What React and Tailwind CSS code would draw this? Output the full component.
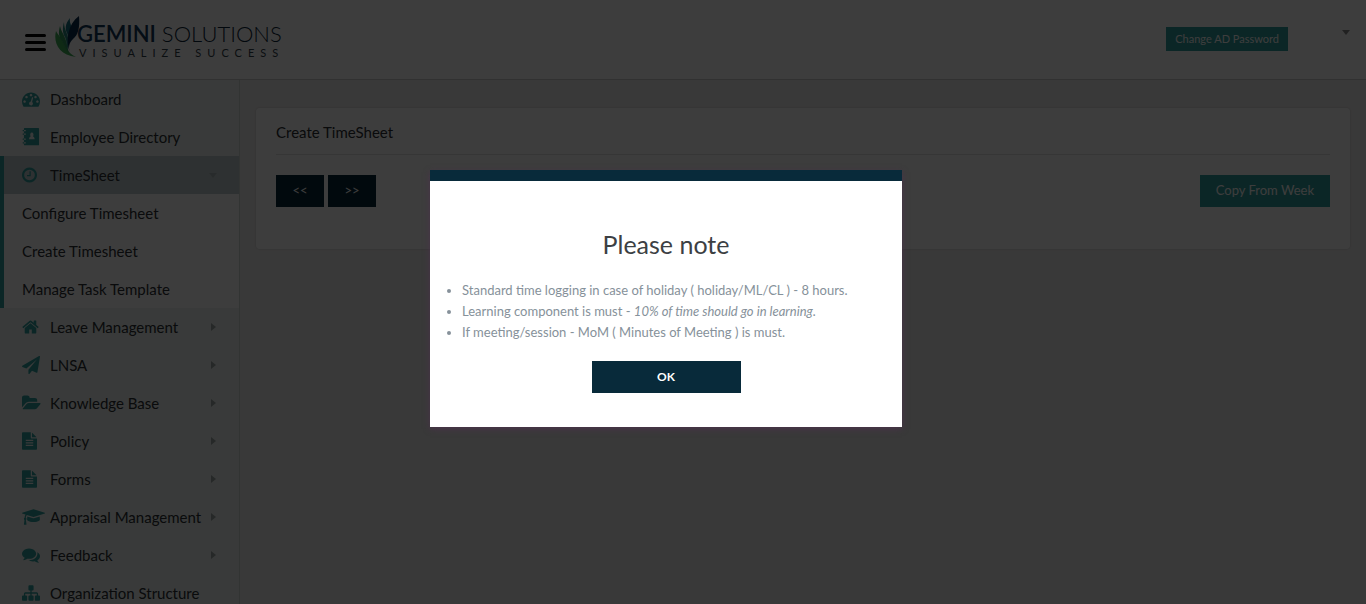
import React from "react";

const ICONS = {
  dashboard: {
    viewBox: "0 0 1792 1792",
    width: "w-[18px]",
    d: "M384 1152q0-53-37.5-90.5t-90.5-37.5-90.5 37.5-37.5 90.5 37.5 90.5 90.5 37.5 90.5-37.5 37.5-90.5zm192-448q0-53-37.5-90.5t-90.5-37.5-90.5 37.5-37.5 90.5 37.5 90.5 90.5 37.5 90.5-37.5 37.5-90.5zm428 481l101-382q6-26-7.5-48.5t-38.5-29.5-48 6.5-30 39.5l-101 382q-60 5-107 43.5t-63 98.5q-20 77 20 146t117 89 146-20 89-117q16-60-6-117t-72-91zm660-33q0-53-37.5-90.5t-90.5-37.5-90.5 37.5-37.5 90.5 37.5 90.5 90.5 37.5 90.5-37.5 37.5-90.5zm-640-640q0-53-37.5-90.5t-90.5-37.5-90.5 37.5-37.5 90.5 37.5 90.5 90.5 37.5 90.5-37.5 37.5-90.5zm448 192q0-53-37.5-90.5t-90.5-37.5-90.5 37.5-37.5 90.5 37.5 90.5 90.5 37.5 90.5-37.5 37.5-90.5zm320 448q0 261-141 483-19 29-54 29h-1402q-35 0-54-29-141-221-141-483 0-182 71-348t191-286 286-191 348-71 348 71 286 191 191 286 71 348z",
  },
  book: {
    viewBox: "0 0 1792 1792",
    width: "w-[18px]",
    d: "M256 0h1376q64 0 64 64v1600q0 64-64 64H256q-64 0-64-64v-130h160q32 0 32-32v-60q0-32-32-32H192V1180h160q32 0 32-32v-60q0-32-32-32H192V672h160q32 0 32-32v-60q0-32-32-32H192V318h160q32 0 32-32v-60q0-32-32-32H192V64q0-64 64-64zM980 460a170 200 0 0 0-110 350q-150 40-170 280q0 40 40 40h480q40 0 40-40q-20-240-170-280a170 200 0 0 0-110-350zM96 194h100v124H96q-32 0-32-32v-60q0-32 32-32zM96 548h100v124H96q-32 0-32-32v-60q0-32 32-32zM96 1056h100v124H96q-32 0-32-32v-60q0-32 32-32zM96 1410h100v124H96q-32 0-32-32v-60q0-32 32-32z",
  },
  clock: {
    viewBox: "128 0 1536 1792",
    width: "w-[15px]",
    d: "M1024 544v448q0 14-9 23t-23 9h-320q-14 0-23-9t-9-23v-64q0-14 9-23t23-9h224v-352q0-14 9-23t23-9h64q14 0 23 9t9 23zm416 352q0-148-73-273t-198-198-273-73-273 73-198 198-73 273 73 273 198 198 273 73 273-73 198-198 73-273zm224 0q0 209-103 385.5t-279.5 279.5-385.5 103-385.5-103-279.5-279.5-103-385.5 103-385.5 279.5-279.5 385.5-103 385.5 103 279.5 279.5 103 385.5z",
  },
  home: {
    viewBox: "64 0 1664 1792",
    width: "w-[17px]",
    d: "M1472 992v480q0 26-19 45t-45 19h-384v-384h-256v384h-384q-26 0-45-19t-19-45v-480q0-1 .5-3t.5-3l575-474 575 474q1 2 1 6zm223-69l-62 74q-8 9-21 11h-3q-13 0-21-7l-692-577-692 577q-12 8-24 7-13-2-21-11l-62-74q-8-10-7-23.5t11-21.5l719-599q32-26 76-26t76 26l244 204v-195q0-14 9-23t23-9h192q14 0 23 9t9 23v408l219 182q10 8 11 21.5t-7 23.5z",
  },
  plane: {
    viewBox: "0 0 1792 1792",
    width: "w-[18px]",
    d: "M1764 11q33 24 27 64l-256 1536q-5 29-32 45-14 8-31 8-11 0-24-5l-453-185-242 295q-18 23-49 23-13 0-22-4-19-7-30.5-23.5t-11.5-36.5v-349l864-1059-1069 925-395-162q-37-14-40-55-2-40 32-59l1664-960q15-9 32-9 20 0 36 11z",
  },
  folder: {
    viewBox: "0 0 1920 1792",
    width: "w-[19px]",
    d: "M1879 952q0 31-31 66l-336 396q-43 51-120.500 86.500t-143.500 35.500h-1088q-34 0-60.500-13t-26.500-43q0-31 31-66l336-396q43-51 120.500-86.500t143.500-35.500h1088q34 0 60.500 13t26.500 43zm-343-344v160h-832q-94 0-197 47.500t-164 119.500l-337 396-5 6q0-4-.5-12.500t-.5-12.500v-960q0-92 66-158t158-66h320q92 0 158 66t66 158v32h544q92 0 158 66t66 158z",
  },
  file: {
    viewBox: "128 0 1536 1792",
    width: "w-[15px]",
    d: "M1596 476q14 14 28 36h-472v-472q22 14 36 28zm-476 164h544v1056q0 40-28 68t-68 28h-1344q-40 0-68-28t-28-68v-1600q0-40 28-68t68-28h800v544q0 40 28 68t68 28zm160 736v-64q0-14-9-23t-23-9h-704q-14 0-23 9t-9 23v64q0 14 9 23t23 9h704q14 0 23-9t9-23zm0-256v-64q0-14-9-23t-23-9h-704q-14 0-23 9t-9 23v64q0 14 9 23t23 9h704q14 0 23-9t9-23zm0-256v-64q0-14-9-23t-23-9h-704q-14 0-23 9t-9 23v64q0 14 9 23t23 9h704q14 0 23-9t9-23z",
  },
  cap: {
    viewBox: "0 0 2304 1792",
    width: "w-[23px]",
    d: "M1774 836l18 316q4 69-82 128t-235 93.500-323 34.500-323-34.500-235-93.500-82-128l18-316 574 181q22 7 48 7t48-7zm530-324q0 23-22 31l-1120 352q-4 1-10 1t-10-1l-652-206q-43 34-71 111.500t-34 178.500q63 36 63 109 0 69-58 107l58 433q2 14-8 25-9 11-24 11h-192q-15 0-24-11-10-11-8-25l58-433q-58-38-58-107 0-73 65-111 11-207 98-330l-333-104q-22-8-22-31t22-31l1120-352q4-1 10-1t10 1l1120 352q22 8 22 31z",
  },
  comments: {
    viewBox: "0 0 1792 1792",
    width: "w-[18px]",
    d: "M1408 768q0 139-94 257t-256.500 186.500-353.500 68.500q-86 0-176-16-124 88-278 128-36 9-86 16h-3q-11 0-20.500-8t-11.500-21q-1-3-1-6.500t.5-6.500 2-6l2.500-5 3.500-5.500 4-5 4.500-5 4-4.500q5-6 23-25t26-29.500 22.500-29 25-38.500 20.500-44q-124-72-195-177t-71-224q0-139 94-257t256.500-186.500 353.500-68.500 353.500 68.500 256.500 186.500 94 257zm384 256q0 120-71 224.500t-195 176.500q10 24 20.500 44t25 38.500 22.500 29 26 29.500 23 25q1 1 4 4.500t4.500 5 4 5 3.500 5.500l2.500 5 2 6 .5 6.500-1 6.500q-3 14-13 22t-22 7q-50-7-86-16-154-40-278-128-90 16-176 16-271 0-472-132 58 4 88 4 161 0 309-45t264-129q125-92 192-212t67-254q0-77-23-152 129 71 204 178t75 230z",
  },
  sitemap: {
    viewBox: "0 0 1792 1792",
    width: "w-[18px]",
    d: "M1792 1248v320q0 40-28 68t-68 28h-320q-40 0-68-28t-28-68v-320q0-40 28-68t68-28h96v-192h-512v192h96q40 0 68 28t28 68v320q0 40-28 68t-68 28h-320q-40 0-68-28t-28-68v-320q0-40 28-68t68-28h96v-192h-512v192h96q40 0 68 28t28 68v320q0 40-28 68t-68 28h-320q-40 0-68-28t-28-68v-320q0-40 28-68t68-28h96v-192q0-52 38-90t90-38h512v-192h-96q-40 0-68-28t-28-68v-320q0-40 28-68t68-28h320q40 0 68 28t28 68v320q0 40-28 68t-68 28h-96v192h512q52 0 90 38t38 90v192h96q40 0 68 28t28 68z",
  },
};

function Icon({ name }) {
  const icon = ICONS[name];
  return (
    <svg viewBox={icon.viewBox} className={`h-[18px] shrink-0 ${icon.width}`} fill="currentColor" fillRule="evenodd" aria-hidden="true">
      <path d={icon.d} />
    </svg>
  );
}

function Caret({ down = false, className = "" }) {
  return (
    <svg viewBox="0 0 8 8" className={`size-2 ${className}`} fill="currentColor" aria-hidden="true">
      <path d={down ? "M0 2h8L4 7z" : "M2 0v8l5-4z"} />
    </svg>
  );
}

const MENU = [
  { label: "Dashboard", icon: "dashboard" },
  { label: "Employee Directory", icon: "book" },
  {
    label: "TimeSheet",
    icon: "clock",
    children: ["Configure Timesheet", "Create Timesheet", "Manage Task Template"],
  },
  { label: "Leave Management", icon: "home", more: true },
  { label: "LNSA", icon: "plane", more: true },
  { label: "Knowledge Base", icon: "folder", more: true },
  { label: "Policy", icon: "file", more: true },
  { label: "Forms", icon: "file", more: true },
  { label: "Appraisal Management", icon: "cap", more: true },
  { label: "Feedback", icon: "comments", more: true },
  { label: "Organization Structure", icon: "sitemap" },
];

function MenuItem({ item }) {
  const open = Boolean(item.children);
  return (
    <li className={open ? "border-l-4 border-[#2f9e9e] bg-white" : ""}>
      <a href="#" className={`flex h-[38px] items-center pr-[22px] ${open ? "bg-[#c0cdd0] pl-[18px]" : "pl-[22px]"}`}>
        <span className="flex w-7 shrink-0 text-[#2f9e9e]">
          <Icon name={item.icon} />
        </span>
        <span className="whitespace-nowrap">{item.label}</span>
        {item.more && <Caret className="ml-auto text-[#a0a8a6]" />}
        {open && <Caret down className="ml-auto text-[#a9b5b8]" />}
      </a>
      {open && (
        <ul>
          {item.children.map((label) => (
            <li key={label}>
              <a href="#" className="flex h-[38px] items-center pl-[18px]">
                {label}
              </a>
            </li>
          ))}
        </ul>
      )}
    </li>
  );
}

function Logo() {
  return (
    <a href="#" className="ml-[9px] flex items-start">
      <svg viewBox="0 0 26 42" className="h-[42px] w-[26px]" aria-hidden="true">
        <path d="M1 15C-2 27 4 39 21 41C13 37 10 31 8 26C6 21 3 19 1 15Z" fill="#3fae5a" />
        <path d="M5 10C3 17 4 21 7 25C9 29 10 33 14 37C12 30 12 27 10 22C8 17 6 15 5 10Z" fill="#35995c" />
        <path d="M9 6C7 13 8 18 10 21C12 25 11 29 13 34C13 27 14 23 12 18C10 13 9 10 9 6Z" fill="#26877c" />
        <path d="M15 2C10 8 10 13 12 17C14 21 12 25 13 29C14 22 17 20 17 14C17 9 14 7 15 2Z" fill="#177080" />
        <path d="M24 0C25 12 23 19 18 23C14 27 13 31 15 37C10 24 13 8 24 0Z" fill="#092c4c" />
      </svg>
      <span className="-ml-1 flex flex-col pt-[6px]">
        <span className="text-[22px] leading-6 font-light whitespace-nowrap text-[#0b2437]">
          <span className="font-semibold text-[#12375a]">GEMINI</span> SOLUTIONS
        </span>
        <span className="pl-[2px] text-[11px] leading-[14px] tracking-[6px] whitespace-nowrap text-[#31404a]">VISUALIZE SUCCESS</span>
      </span>
    </a>
  );
}

export default function App() {
  return (
    <div className="relative flex h-screen flex-col overflow-hidden bg-[#eeecec] font-['Lato',sans-serif] text-[#2b2f33]">
      <header className="flex h-20 shrink-0 items-start border-b border-[#cbcbcb] bg-white pl-[25px] pr-4">
        <button type="button" aria-label="Toggle menu" className="mt-[34px] flex w-[21px] flex-col gap-1">
          <span className="h-[3px] rounded-sm bg-black" />
          <span className="h-[3px] rounded-sm bg-black" />
          <span className="h-[3px] rounded-sm bg-black" />
        </button>
        <div className="pt-4">
          <Logo />
        </div>
        <button type="button" className="mt-[27px] ml-auto h-6 bg-[#2f9e9e] px-[9px] text-[11px] whitespace-nowrap text-white">
          Change AD Password
        </button>
        <button type="button" aria-label="Account menu" className="mt-7 ml-[54px] text-[#8c8c8c]">
          <Caret down />
        </button>
      </header>

      <div className="flex min-h-0 flex-1">
        <nav className="w-60 shrink-0 overflow-hidden border-r border-[#d2d8d6] bg-[#ecf3f0] text-[15px]">
          <ul>
            {MENU.map((item) => (
              <MenuItem key={item.label} item={item} />
            ))}
          </ul>
        </nav>

        <main className="min-w-0 flex-1 px-4 pt-7">
          <section className="rounded bg-white px-5 pt-3 pb-[42px] shadow-[0_0_1px_1px_rgba(0,0,0,0.06)]">
            <h1 className="border-b border-[#e3e3e3] pb-[10px] text-[15px] leading-6">Create TimeSheet</h1>
            <div className="flex items-center gap-1 pt-5 text-[13px]">
              <button type="button" className="h-8 w-12 bg-[#072838] text-white">&lt;&lt;</button>
              <button type="button" className="h-8 w-12 bg-[#072838] text-white">&gt;&gt;</button>
              <button type="button" className="ml-auto h-8 bg-[#2f9e9e] px-4 text-white">Copy From Week</button>
            </div>
          </section>
        </main>
      </div>

      <div className="absolute inset-0 flex items-center justify-center bg-black/76 pr-[34px] pb-[7px]">
        <div
          role="dialog"
          aria-modal="true"
          aria-labelledby="note-title"
          className="flex w-[472px] flex-col items-center border-t-[11px] border-[#082a3a] bg-white px-4 pb-[34px] shadow-[0_2px_6px_rgba(75,50,75,0.9)]"
        >
          <h2 id="note-title" className="pt-[47px] text-[25px] leading-8 text-[#3c4043]">
            Please note
          </h2>
          <ul className="mt-5 w-full list-disc pl-4 text-[13px] leading-[21px] text-[#86919a]">
            <li>Standard time logging in case of holiday ( holiday/ML/CL ) - 8 hours.</li>
            <li>
              Learning component is must - <i>10% of time should go in learning.</i>
            </li>
            <li>If meeting/session - MoM ( Minutes of Meeting ) is must.</li>
          </ul>
          <button type="button" className="mt-[18px] h-8 w-[149px] bg-[#082a3a] text-[12px] font-bold text-white">
            OK
          </button>
        </div>
      </div>
    </div>
  );
}
